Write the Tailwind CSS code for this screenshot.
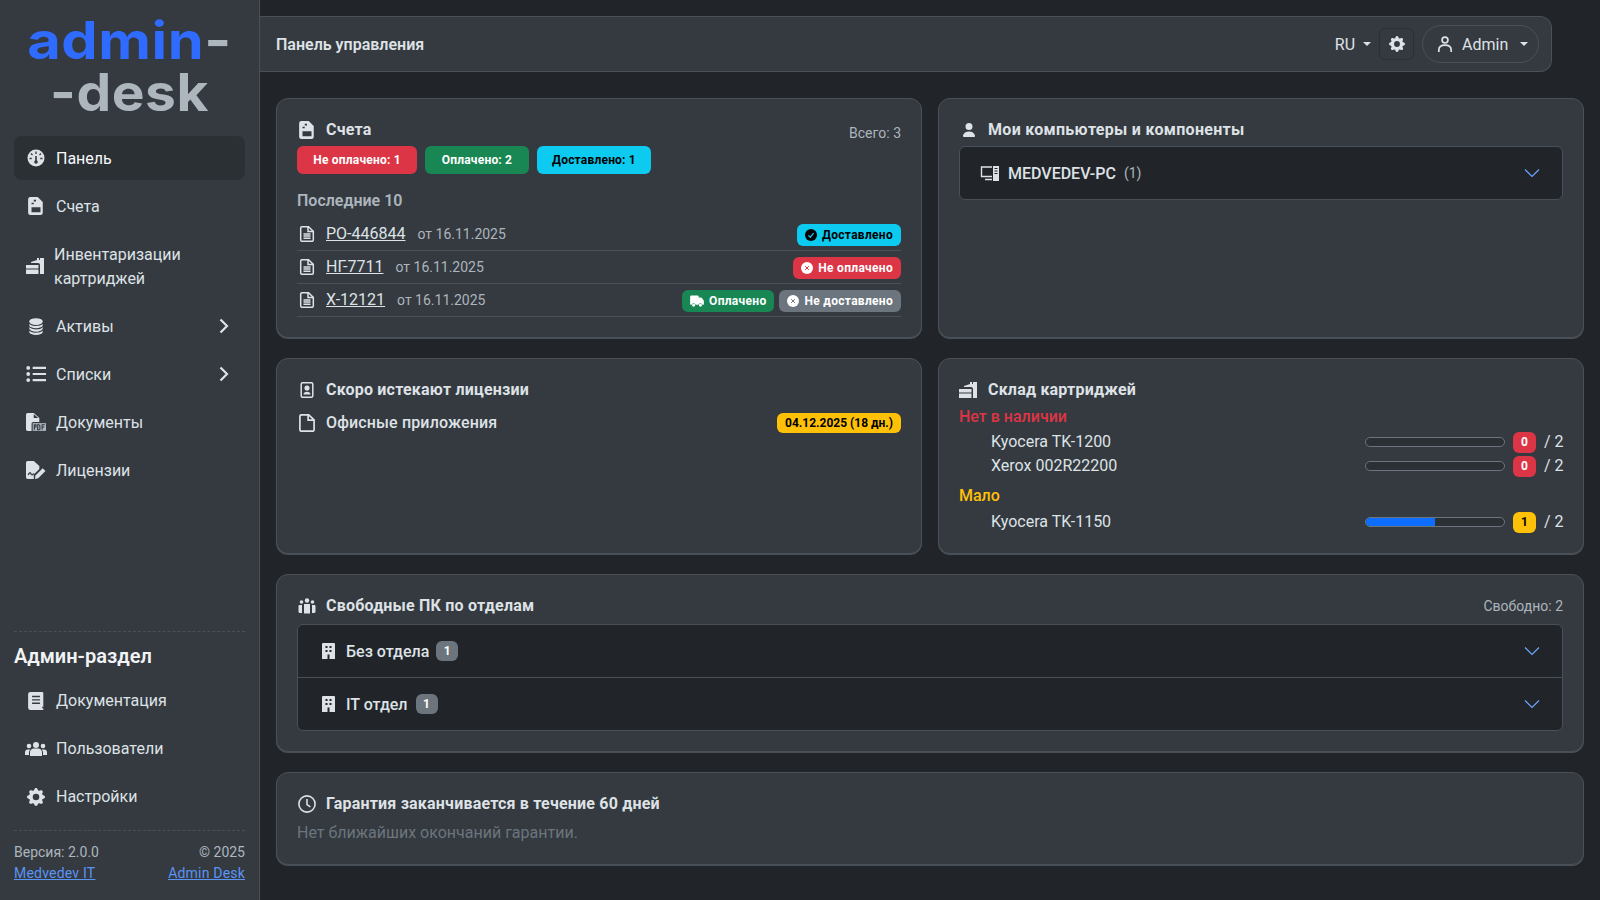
<!DOCTYPE html>
<html lang="ru">
<head>
    <meta charset="UTF-8">
    <meta name="viewport" content="width=device-width, initial-scale=1.0">
    <title>Панель управления</title>
    <script src="https://cdn.jsdelivr.net/npm/@tailwindcss/browser@4"></script>
</head>
<body class="h-screen overflow-hidden flex bg-[#212529] text-[#dee2e6] font-['Roboto','Noto_Sans',sans-serif] text-base">

    <!-- Сайдбар -->
    <aside class="w-[260px] h-[900px] shrink-0 flex flex-col bg-[#343a40] border-r border-[#495057] px-[14px]">
        <div class="h-[136px] pt-[15px] text-center font-['Inter',sans-serif] font-bold text-[52px] leading-[52px] tracking-[0.5px]">
            <div class="text-[#2f6bff] scale-x-[1.11]">admin<span class="text-[#adb5bd]">-</span></div>
            <div class="text-[#adb5bd] scale-x-[1.06]">-desk</div>
        </div>

        <nav class="flex flex-col gap-1">
            <a class="h-11 flex items-center gap-2.5 px-3 rounded-lg bg-[#2b3035] text-[#f8f9fa]">
                <svg class="w-5 h-[18px]" viewBox="0 0 18 18"><circle cx="9" cy="9" r="8.5" fill="#dee2e6"/><path d="M9 2.500v2.500M4 4.500l1.500 1.500M14 4.500l-1.500 1.500M2.500 9.500h2.200M13.300 9.500h2.200" stroke="#343a40" stroke-width="1.300"/><path d="M9 7v5" stroke="#343a40" stroke-width="1.600"/><circle cx="9" cy="13" r="1.800" fill="#343a40"/></svg>
                <span class="pt-0.5">Панель</span>
            </a>
            <a class="h-11 flex items-center gap-2.5 px-3 rounded-lg">
                <svg class="w-5 h-[18px]" viewBox="0 0 14 16"><path fill="#dee2e6" fill-rule="evenodd" d="M2 0h6.500L13 4.500V14a2 2 0 0 1-2 2H2a2 2 0 0 1-2-2V2a2 2 0 0 1 2-2ZM3 9v4.500h8V9ZM5 2.500v1.500h2v-1.500ZM3 5v1.500h2V5Z"/></svg>
                <span class="pt-0.5">Счета</span>
            </a>
            <a class="py-2.5 flex items-center gap-2.5 px-3 rounded-lg leading-6">
                <svg class="w-[18px] h-[18px] shrink-0" viewBox="0 0 18 16"><path fill="#dee2e6" d="M11 0h2v2h1V0h4v16H14V7a2 2 0 0 0-2-2H5V4l6-2ZM0 7h12.500v3.500H0ZM0 11.500h12.500V16H0Z"/></svg>
                <span class="translate-y-px">Инвентаризации<br>картриджей</span>
            </a>
            <a class="h-11 flex items-center gap-2.5 px-3 rounded-lg">
                <svg class="w-5 h-[18px]" viewBox="0 0 16 16" fill="#dee2e6"><path d="M3.900 1.800C5 1.300 6.400 1 8 1s3 .3 4.100.8C13.100 2.200 14 3 14 4s-.9 1.800-1.900 2.200C11 6.700 9.600 7 8 7s-3-.3-4.100-.8C2.900 5.800 2 5 2 4s.9-1.800 1.900-2.200"/><path d="M2 6.200V7c0 1 .9 1.800 1.900 2.200C5 9.700 6.400 10 8 10s3-.3 4.100-.8C13.100 8.800 14 8 14 7v-.8c-.5.400-1 .7-1.500 1C11.300 7.700 9.700 8 8 8s-3.300-.3-4.500-.9c-.5-.2-1-.5-1.500-.9"/><path d="M2 9.200V10c0 1 .9 1.800 1.900 2.200 1.100.5 2.500.8 4.100.8s3-.3 4.100-.8c1-.4 1.900-1.200 1.900-2.200v-.8c-.5.400-1 .7-1.500 1-1.200.5-2.800.8-4.500.8s-3.300-.3-4.500-.9c-.5-.2-1-.5-1.500-.9"/><path d="M2 12.200V13c0 1 .9 1.800 1.900 2.200 1.100.5 2.500.8 4.100.8s3-.3 4.100-.8c1-.4 1.900-1.200 1.900-2.200v-.8c-.5.400-1 .7-1.500 1-1.200.5-2.800.8-4.500.8s-3.300-.3-4.500-.9c-.5-.2-1-.5-1.500-.9"/></svg>
                <span class="pt-0.5">Активы</span>
                <svg class="w-3.5 h-4 ml-auto mr-[2px]" viewBox="0 0 12 16" fill="none" stroke="#dee2e6" stroke-width="2.200"><path d="M2.500 1.500 9 8l-6.500 6.500"/></svg>
            </a>
            <a class="h-11 flex items-center gap-2.5 px-3 rounded-lg">
                <svg class="w-5 h-[18px]" viewBox="0 0 18 16" fill="#dee2e6"><circle cx="2" cy="2.500" r="1.700"/><circle cx="2" cy="8" r="1.700"/><circle cx="2" cy="13.500" r="1.700"/><path d="M6 1.500h12v2H6ZM6 7h12v2H6ZM6 12.500h12v2H6Z"/></svg>
                <span class="pt-0.5">Списки</span>
                <svg class="w-3.5 h-4 ml-auto mr-[2px]" viewBox="0 0 12 16" fill="none" stroke="#dee2e6" stroke-width="2.200"><path d="M2.500 1.500 9 8l-6.500 6.500"/></svg>
            </a>
            <a class="h-11 flex items-center gap-2.5 px-3 rounded-lg">
                <svg class="w-5 h-[18px]" viewBox="0 0 18 16"><path fill="#dee2e6" d="M1.500 0H7l5 4.500V8H6.500A1.500 1.500 0 0 0 5 9.500V16H1.500A1.500 1.500 0 0 1 0 14.500v-13A1.500 1.500 0 0 1 1.500 0Z"/><path fill="#343a40" d="M7 1v3.500h4Z"/><path fill="#adb5bd" d="M6 9h12v7H6Z"/><path stroke="#343a40" stroke-width="1" fill="none" d="M7.500 15v-4.500h1.500v2H7.500M10.500 15v-4.500h1a1 1 0 0 1 1 1v2a1 1 0 0 1-1 1.500ZM14.500 15v-4.500h2.500M14.500 12.500h2"/></svg>
                <span class="pt-0.5">Документы</span>
            </a>
            <a class="h-11 flex items-center gap-2.5 px-3 rounded-lg">
                <svg class="w-5 h-[18px]" viewBox="0 0 18 16"><path fill="#dee2e6" d="M1.500 0H7l5 4.500V7L7 12v4H1.500A1.500 1.500 0 0 1 0 14.500v-13A1.500 1.500 0 0 1 1.500 0Z"/><path stroke="#343a40" stroke-width="1.200" fill="none" d="M2 12.500c1-2.500 2-2.500 2.500-1s1.500 1 2.500-.5"/><path fill="#dee2e6" d="M15 6.500l2.500 2.500L11 15.500 8 16l.5-3Z"/></svg>
                <span class="pt-0.5">Лицензии</span>
            </a>
        </nav>

        <div class="mt-auto border-t border-dashed border-[#495057] pt-[9px]">
            <div class="h-[30px] flex items-center text-xl font-semibold text-[#f1f3f5]">Админ-раздел</div>
            <div class="mt-2 flex flex-col gap-1">
                <a class="h-11 flex items-center gap-2.5 px-3 rounded-lg">
                    <svg class="w-5 h-[18px]" viewBox="0 0 16 16"><path fill="#dee2e6" d="M3 0h10.500a1 1 0 0 1 1 1v12h-1v1.500h1V16H3a2 2 0 0 1-2-2V2a2 2 0 0 1 2-2Z"/><path stroke="#343a40" stroke-width="1.200" d="M4.500 4h7M4.500 7h7M4.500 10h7"/></svg>
                    <span>Документация</span>
                </a>
                <a class="h-11 flex items-center gap-2.5 px-3 rounded-lg">
                    <svg class="w-[22px] h-[18px] -ml-px -mr-px" viewBox="0 0 22 16" fill="#dee2e6"><circle cx="4" cy="5" r="2.300"/><circle cx="18" cy="5" r="2.300"/><circle cx="11" cy="4" r="3"/><path d="M0 14v-2.500a3 3 0 0 1 3-3h2.500a4 4 0 0 0-1.500 3V14ZM22 14v-2.500a3 3 0 0 0-3-3h-2.500a4 4 0 0 1 1.500 3V14ZM5 15v-3a4 4 0 0 1 4-4.500h4a4 4 0 0 1 4 4.500v3Z"/></svg>
                    <span>Пользователи</span>
                </a>
                <a class="h-11 flex items-center gap-2.5 px-3 rounded-lg">
                    <svg class="w-5 h-[18px]" viewBox="0 0 16 16" fill="#dee2e6"><path d="M9.405 1.050c-.413-1.400-2.397-1.400-2.810 0l-.1.340a1.464 1.464 0 0 1-2.105.872l-.31-.17c-1.283-.698-2.686.705-1.987 1.987l.169.311c.446.820.023 1.841-.872 2.105l-.34.1c-1.400.413-1.400 2.397 0 2.810l.34.1a1.464 1.464 0 0 1 .872 2.105l-.17.31c-.698 1.283.705 2.686 1.987 1.987l.311-.169a1.464 1.464 0 0 1 2.105.872l.1.340c.413 1.400 2.397 1.400 2.810 0l.1-.34a1.464 1.464 0 0 1 2.105-.872l.31.17c1.283.698 2.686-.705 1.987-1.987l-.169-.311a1.464 1.464 0 0 1 .872-2.105l.34-.1c1.400-.413 1.400-2.397 0-2.810l-.34-.1a1.464 1.464 0 0 1-.872-2.105l.17-.31c.698-1.283-.705-2.686-1.987-1.987l-.311.169a1.464 1.464 0 0 1-2.105-.872zM8 10.930a2.929 2.929 0 1 1 0-5.860 2.929 2.929 0 0 1 0 5.858z"/></svg>
                    <span>Настройки</span>
                </a>
            </div>
            <div class="mt-[11px] border-t border-dashed border-[#495057] pt-[11px] pb-4 text-sm leading-[21px]">
                <div class="flex justify-between text-[#adb5bd]"><span>Версия: 2.0.0</span><span>© 2025</span></div>
                <div class="flex justify-between text-[#5a94f5] underline tracking-[0.2px]"><a>Medvedev IT</a><a>Admin Desk</a></div>
            </div>
        </div>
    </aside>

    <main class="flex-1 min-w-0">
        <!-- Верхняя панель -->
        <div class="pt-4 pr-12">
            <header class="h-14 flex items-center bg-[#343a40] border-y border-r border-[#495057] rounded-r-xl pl-4 pr-[12px]">
                <span class="pt-0.5 font-semibold">Панель управления</span>
                <div class="ml-auto flex items-center">
                    <span class="pt-0.5">RU</span>
                    <span class="ml-2 border-x-[4.5px] border-t-[4.5px] border-x-transparent border-t-[#dee2e6]"></span>
                    <span class="ml-2 w-[35px] h-[32px] flex items-center justify-center rounded-md border border-[#2b3035]">
                        <svg class="w-4 h-4" viewBox="0 0 16 16" fill="#dee2e6"><path d="M9.405 1.050c-.413-1.400-2.397-1.400-2.810 0l-.1.340a1.464 1.464 0 0 1-2.105.872l-.31-.17c-1.283-.698-2.686.705-1.987 1.987l.169.311c.446.820.023 1.841-.872 2.105l-.34.1c-1.400.413-1.400 2.397 0 2.810l.34.1a1.464 1.464 0 0 1 .872 2.105l-.17.31c-.698 1.283.705 2.686 1.987 1.987l.311-.169a1.464 1.464 0 0 1 2.105.872l.1.340c.413 1.400 2.397 1.400 2.810 0l.1-.34a1.464 1.464 0 0 1 2.105-.872l.31.17c1.283.698 2.686-.705 1.987-1.987l-.169-.311a1.464 1.464 0 0 1 .872-2.105l.34-.1c1.400-.413 1.400-2.397 0-2.810l-.34-.1a1.464 1.464 0 0 1-.872-2.105l.17-.31c.698-1.283-.705-2.686-1.987-1.987l-.311.169a1.464 1.464 0 0 1-2.105-.872zM8 10.930a2.929 2.929 0 1 1 0-5.860 2.929 2.929 0 0 1 0 5.858z"/></svg>
                    </span>
                    <span class="ml-2 w-[117px] h-[38px] flex items-center rounded-full border border-[#495057] pl-[13px]">
                        <svg class="w-[18px] h-[18px]" viewBox="0 0 16 16" fill="none" stroke="#dee2e6" stroke-width="1.500"><circle cx="8" cy="4.500" r="2.600"/><path d="M2.500 15v-1.500C2.500 10.500 5 9 8 9s5.500 1.500 5.500 4.500V15"/></svg>
                        <span class="ml-2 pt-0.5">Admin</span>
                        <span class="ml-3 border-x-[4.5px] border-t-[4.5px] border-x-transparent border-t-[#dee2e6]"></span>
                    </span>
                </div>
            </header>
        </div>

        <div class="mt-[26px] px-4 grid grid-cols-2 gap-x-4 gap-y-5">

            <!-- Счета -->
            <section class="h-[240px] rounded-xl border border-[#495057] shadow-[0_1px_0_#495057] bg-[#343a40] px-5 pt-[19px]">
                <div class="h-6 flex items-start justify-between">
                    <h3 class="flex items-center font-bold tracking-[0.2px]">
                        <svg class="w-4 h-[18px] ml-[2px] mr-[11px]" viewBox="0 0 14 16"><path fill="#dee2e6" fill-rule="evenodd" d="M2 0h6.500L13 4.500V14a2 2 0 0 1-2 2H2a2 2 0 0 1-2-2V2a2 2 0 0 1 2-2ZM3 9v4.500h8V9ZM5 2.500v1.500h2v-1.500ZM3 5v1.500h2V5Z"/></svg>
                        Счета
                    </h3>
                    <span class="pt-[5px] text-sm leading-[21px] text-[#adb5bd]">Всего: 3</span>
                </div>
                <div class="mt-1 flex gap-2 text-xs font-bold tracking-[0.2px]">
                    <span class="h-7 w-[120px] flex items-center justify-center rounded-md bg-[#dc3545] text-white">Не оплачено: 1</span>
                    <span class="h-7 w-[104px] flex items-center justify-center rounded-md bg-[#198754] text-white">Оплачено: 2</span>
                    <span class="h-7 w-[114px] flex items-center justify-center rounded-md bg-[#0dcaf0] text-black">Доставлено: 1</span>
                </div>
                <div class="mt-[15px] font-semibold text-[#adb5bd] leading-6">Последние 10</div>
                <ul class="mt-[5px]">
                    <li class="h-[33px] flex items-center border-b border-[#495057]">
                        <svg class="w-4 h-4 ml-[2px] mr-[11px]" viewBox="0 0 14 16" fill="none" stroke="#dee2e6" stroke-width="1.500"><path d="M2 .7h6.500l4.800 4.500V14a1.300 1.300 0 0 1-1.300 1.300H2A1.300 1.300 0 0 1 .7 14V2A1.300 1.300 0 0 1 2 .7ZM8 1v4.500h5M3.500 8h7M3.500 10h7M3.500 12.300h7"/></svg>
                        <a class="underline">РО-446844</a>
                        <span class="ml-3 text-sm text-[#adb5bd]">от 16.11.2025</span>
                        <span class="ml-auto mt-px h-[22px] px-2 flex items-center gap-[5px] rounded-md bg-[#0dcaf0] text-black text-xs font-bold tracking-[0.3px]">
                            <svg class="w-3 h-3" viewBox="0 0 16 16"><circle cx="8" cy="8" r="8" fill="#000"/><path d="M4.500 8.500 7 11l4.500-5.500" fill="none" stroke="#0dcaf0" stroke-width="1.600"/></svg>
                            Доставлено
                        </span>
                    </li>
                    <li class="h-[33px] flex items-center border-b border-[#495057]">
                        <svg class="w-4 h-4 ml-[2px] mr-[11px]" viewBox="0 0 14 16" fill="none" stroke="#dee2e6" stroke-width="1.500"><path d="M2 .7h6.500l4.800 4.500V14a1.300 1.300 0 0 1-1.300 1.300H2A1.300 1.300 0 0 1 .7 14V2A1.300 1.300 0 0 1 2 .7ZM8 1v4.500h5M3.500 8h7M3.500 10h7M3.500 12.300h7"/></svg>
                        <a class="underline">НГ-7711</a>
                        <span class="ml-3 text-sm text-[#adb5bd]">от 16.11.2025</span>
                        <span class="ml-auto mt-px h-[22px] px-2 flex items-center gap-[5px] rounded-md bg-[#dc3545] text-white text-xs font-bold tracking-[0.3px]">
                            <svg class="w-3 h-3" viewBox="0 0 16 16"><circle cx="8" cy="8" r="8" fill="#fff"/><path d="M5.500 5.500l5 5M10.500 5.500l-5 5" stroke="#dc3545" stroke-width="1.300"/></svg>
                            Не оплачено
                        </span>
                    </li>
                    <li class="h-[33px] flex items-center border-b border-[#495057]">
                        <svg class="w-4 h-4 ml-[2px] mr-[11px]" viewBox="0 0 14 16" fill="none" stroke="#dee2e6" stroke-width="1.500"><path d="M2 .7h6.500l4.800 4.500V14a1.300 1.300 0 0 1-1.300 1.300H2A1.300 1.300 0 0 1 .7 14V2A1.300 1.300 0 0 1 2 .7ZM8 1v4.500h5M3.500 8h7M3.500 10h7M3.500 12.300h7"/></svg>
                        <a class="underline">Х-12121</a>
                        <span class="ml-3 text-sm text-[#adb5bd]">от 16.11.2025</span>
                        <span class="ml-auto mt-px h-[22px] px-2 flex items-center gap-[5px] rounded-md bg-[#198754] text-white text-xs font-bold tracking-[0.3px]">
                            <svg class="w-[14px] h-3" viewBox="0 0 16 14" fill="#fff"><path d="M0 2a1.500 1.500 0 0 1 1.500-1.500h7A1.500 1.500 0 0 1 10 2v1h2.500c.5 0 .9.2 1.200.6l2 2.600c.2.300.3.600.3.900V10.500a1 1 0 0 1-1 1h-.6a2.500 2.500 0 0 0-4.800 0H6.400a2.500 2.500 0 0 0-4.800 0H1a1 1 0 0 1-1-1Z"/><circle cx="4" cy="12" r="1.700"/><circle cx="12" cy="12" r="1.700"/></svg>
                            Оплачено
                        </span>
                        <span class="ml-[5px] mt-px h-[22px] px-2 flex items-center gap-[5px] rounded-md bg-[#6c757d] text-white text-xs font-bold tracking-[0.3px]">
                            <svg class="w-3 h-3" viewBox="0 0 16 16"><circle cx="8" cy="8" r="8" fill="#fff"/><path d="M5.500 5.500l5 5M10.500 5.500l-5 5" stroke="#6c757d" stroke-width="1.300"/></svg>
                            Не доставлено
                        </span>
                    </li>
                </ul>
            </section>

            <!-- Компьютеры -->
            <section class="h-[240px] rounded-xl border border-[#495057] shadow-[0_1px_0_#495057] bg-[#343a40] px-5 pt-[19px]">
                <h3 class="flex items-center font-bold tracking-[0.3px]">
                    <svg class="w-4 h-[18px] ml-[2px] mr-[11px]" viewBox="0 0 16 16" fill="#dee2e6"><path d="M3 15s-1 0-1-1 1-4.500 6-4.500S14 13 14 14s-1 1-1 1Zm5-7a3.500 3.500 0 1 0 0-7 3.500 3.500 0 0 0 0 7Z"/></svg>
                    Мои компьютеры и компоненты
                </h3>
                <div class="mt-[4px] h-[54px] flex items-center rounded-md border border-[#495057] bg-[#212529] pl-5 pr-[22px]">
                    <svg class="w-[19px] h-4 mr-[9px]" viewBox="0 0 19 16" fill="none" stroke="#dee2e6" stroke-width="1.400"><path d="M12 2H1.500v9.500H12M5 14.500h7"/><path fill="#dee2e6" stroke="none" d="M13 1h6v15h-6Z"/><path stroke="#212529" stroke-width="1" d="M14.500 3.500h3M14.500 6h3M14.500 8.500h3"/></svg>
                    <span class="pt-0.5 font-medium">MEDVEDEV-PC</span>
                    <span class="ml-2 text-sm text-[#adb5bd]">(1)</span>
                    <svg class="ml-auto w-4 h-4" viewBox="0 0 16 16" fill="none" stroke="#6ea8fe" stroke-width="1.100"><path d="M1 4.500 8 11.500l7-7"/></svg>
                </div>
            </section>

            <!-- Лицензии -->
            <section class="h-[196px] rounded-xl border border-[#495057] shadow-[0_1px_0_#495057] bg-[#343a40] px-5 pt-[19px]">
                <h3 class="flex items-center font-bold tracking-[0.2px]">
                    <svg class="w-4 h-4 ml-[2px] mr-[11px]" viewBox="0 0 14 16" fill="none" stroke="#dee2e6" stroke-width="1.500"><rect x="1.200" y=".7" width="11.600" height="14.600" rx="1.500"/><circle cx="7" cy="6" r="1.800" fill="#dee2e6"/><path d="M3.500 12.500c0-2 1.500-2.800 3.500-2.800s3.500.8 3.500 2.800Z" fill="#dee2e6" stroke="none"/></svg>
                    Скоро истекают лицензии
                </h3>
                <div class="mt-[9px] flex items-center h-6">
                    <svg class="w-4 h-[18px] ml-[2px] mr-[11px]" viewBox="0 0 14 16" fill="none" stroke="#dee2e6" stroke-width="1.500"><path d="M2 .7h6.500l4.800 4.500V14a1.300 1.300 0 0 1-1.300 1.300H2A1.300 1.300 0 0 1 .7 14V2A1.300 1.300 0 0 1 2 .7ZM8 1v4.500h5"/></svg>
                    <span class="font-medium tracking-[0.15px]">Офисные приложения</span>
                    <span class="ml-auto h-5 px-2 flex items-center rounded-md bg-[#ffc107] text-black text-xs font-bold">04.12.2025 (18 дн.)</span>
                </div>
            </section>

            <!-- Склад картриджей -->
            <section class="h-[196px] rounded-xl border border-[#495057] shadow-[0_1px_0_#495057] bg-[#343a40] px-5 pt-[19px]">
                <h3 class="flex items-center font-bold tracking-[0.2px]">
                    <svg class="w-[18px] h-4 mr-[11px]" viewBox="0 0 18 16"><path fill="#dee2e6" d="M11 0h2v2h1V0h4v16H14V7a2 2 0 0 0-2-2H5V4l6-2ZM0 7h12.500v3.500H0ZM0 11.500h12.500V16H0Z"/></svg>
                    Склад картриджей
                </h3>
                <div class="mt-[3px] h-6 leading-6 font-medium text-[#dc3545]">Нет в наличии</div>
                <div class="mt-px h-6 pl-8 flex items-center">
                    <span>Kyocera TK-1200</span>
                    <span class="ml-auto w-[140px] h-2.5 rounded-full border border-[#6c757d] bg-[#2b3035]"></span>
                    <span class="ml-2 w-[23px] h-[21px] flex items-center justify-center rounded-md bg-[#dc3545] text-white text-xs font-bold">0</span>
                    <span class="ml-2 w-[19px] text-right whitespace-nowrap">/ 2</span>
                </div>
                <div class="h-6 pl-8 flex items-center">
                    <span>Xerox 002R22200</span>
                    <span class="ml-auto w-[140px] h-2.5 rounded-full border border-[#6c757d] bg-[#2b3035]"></span>
                    <span class="ml-2 w-[23px] h-[21px] flex items-center justify-center rounded-md bg-[#dc3545] text-white text-xs font-bold">0</span>
                    <span class="ml-2 w-[19px] text-right whitespace-nowrap">/ 2</span>
                </div>
                <div class="mt-1.5 h-6 leading-6 font-medium text-[#ffc107]">Мало</div>
                <div class="mt-0.5 h-6 pl-8 flex items-center">
                    <span>Kyocera TK-1150</span>
                    <span class="ml-auto w-[140px] h-2.5 rounded-full border border-[#6c757d] bg-[#2b3035] overflow-hidden"><span class="block w-1/2 h-full bg-[#0d6efd]"></span></span>
                    <span class="ml-2 w-[23px] h-[21px] flex items-center justify-center rounded-md bg-[#ffc107] text-black text-xs font-bold">1</span>
                    <span class="ml-2 w-[19px] text-right whitespace-nowrap">/ 2</span>
                </div>
            </section>

            <!-- Свободные ПК -->
            <section class="col-span-2 rounded-xl border border-[#495057] shadow-[0_1px_0_#495057] bg-[#343a40] px-5 pt-[19px] pb-5">
                <div class="h-6 flex items-start justify-between">
                    <h3 class="flex items-center font-bold tracking-[0.2px]">
                        <svg class="w-[18px] h-4 ml-px mr-[10px]" viewBox="0 0 18 16" fill="#dee2e6"><circle cx="3.500" cy="4" r="1.800"/><circle cx="14.500" cy="4" r="1.800"/><circle cx="9" cy="2.500" r="2.200"/><path d="M1 7h3v8H2a1.500 1.500 0 0 1-1.500-1.500V8ZM17 7h-3v8h2a1.500 1.500 0 0 0 1.500-1.500V8ZM6 6h6v9.500H6Z"/></svg>
                        Свободные ПК по отделам
                    </h3>
                    <span class="pt-[2px] text-sm leading-[21px] text-[#adb5bd]">Свободно: 2</span>
                </div>
                <div class="mt-1.5 rounded-md border border-[#495057] bg-[#212529]">
                    <div class="h-[53px] flex items-center border-b border-[#495057] pl-6 pr-[22px]">
                        <svg class="w-[13px] h-4 mr-[11px]" viewBox="0 0 13 16"><path fill="#dee2e6" d="M1 0h11a1 1 0 0 1 1 1v15H0V1a1 1 0 0 1 1-1Z"/><path fill="#212529" d="M3.500 3h2v2h-2ZM7.500 3h2v2h-2ZM3.500 7h2v2h-2ZM7.500 7h2v2h-2ZM5.500 11.500h2V16h-2Z"/></svg>
                        <span class="pt-0.5 font-medium">Без отдела</span>
                        <span class="ml-[7px] w-[22px] h-5 flex items-center justify-center rounded-md bg-[#6c757d] text-white text-xs font-bold">1</span>
                        <svg class="ml-auto w-4 h-4" viewBox="0 0 16 16" fill="none" stroke="#6ea8fe" stroke-width="1.100"><path d="M1 4.500 8 11.500l7-7"/></svg>
                    </div>
                    <div class="h-[52px] flex items-center pl-6 pr-[22px]">
                        <svg class="w-[13px] h-4 mr-[11px]" viewBox="0 0 13 16"><path fill="#dee2e6" d="M1 0h11a1 1 0 0 1 1 1v15H0V1a1 1 0 0 1 1-1Z"/><path fill="#212529" d="M3.500 3h2v2h-2ZM7.500 3h2v2h-2ZM3.500 7h2v2h-2ZM7.500 7h2v2h-2ZM5.500 11.500h2V16h-2Z"/></svg>
                        <span class="pt-0.5 font-medium">IT отдел</span>
                        <span class="ml-2 w-[22px] h-5 flex items-center justify-center rounded-md bg-[#6c757d] text-white text-xs font-bold">1</span>
                        <svg class="ml-auto w-4 h-4" viewBox="0 0 16 16" fill="none" stroke="#6ea8fe" stroke-width="1.100"><path d="M1 4.500 8 11.500l7-7"/></svg>
                    </div>
                </div>
            </section>

            <!-- Гарантия -->
            <section class="col-span-2 rounded-xl border border-[#495057] shadow-[0_1px_0_#495057] bg-[#343a40] px-5 pt-[19px] pb-[19px]">
                <h3 class="flex items-center font-bold tracking-[0.2px]">
                    <svg class="w-[18px] h-[18px] ml-px mr-[10px]" viewBox="0 0 16 16" fill="none" stroke="#dee2e6" stroke-width="1.400"><circle cx="8" cy="8" r="7.200"/><path d="M8 3.500V8.500l3 2"/></svg>
                    Гарантия заканчивается в течение 60 дней
                </h3>
                <p class="mt-[5px] leading-6 text-[#6c757d]">Нет ближайших окончаний гарантии.</p>
            </section>
        </div>
    </main>

</body>
</html>
